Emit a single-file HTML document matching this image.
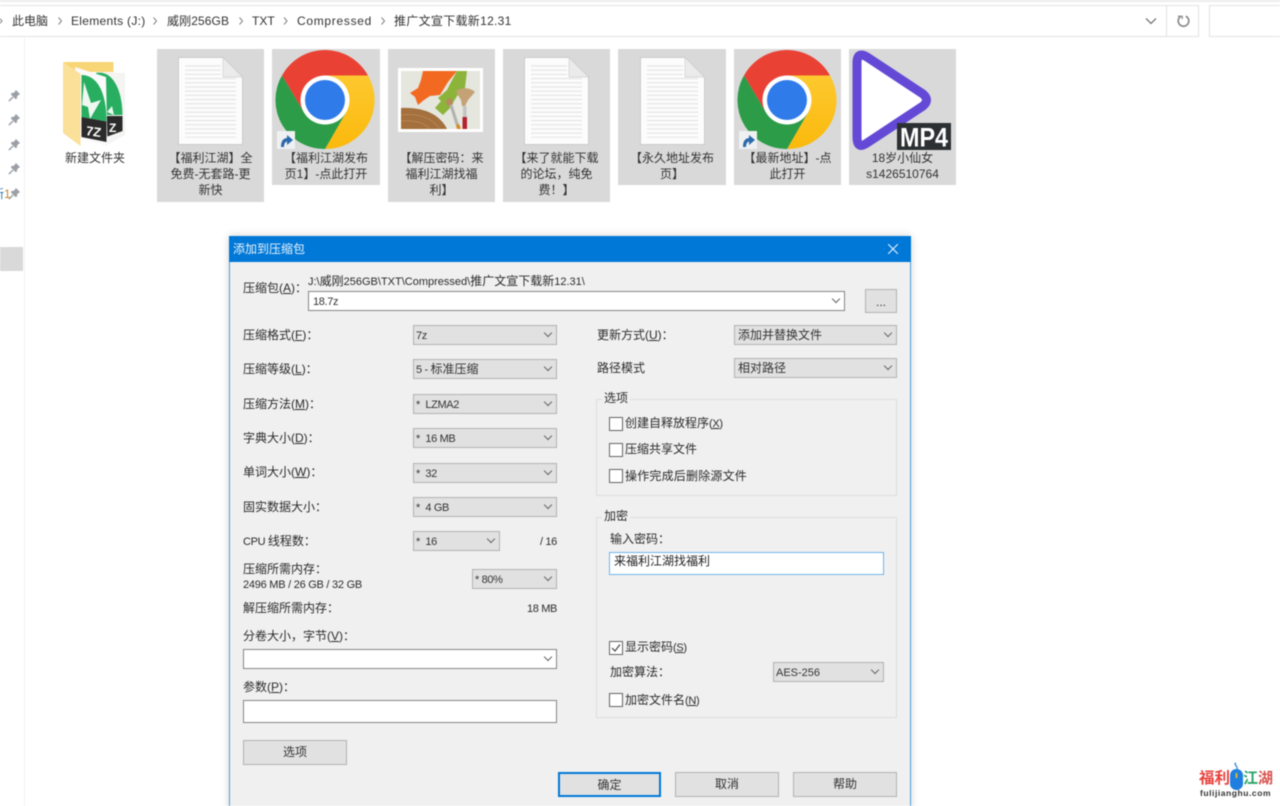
<!DOCTYPE html>
<html lang="zh-CN"><head><meta charset="utf-8"><title>添加到压缩包</title>
<style>
html,body{margin:0;padding:0;width:1280px;height:806px;overflow:hidden;background:#fff}
#w{position:absolute;left:0;top:0;width:1280px;height:806px;overflow:hidden;background:#fff;filter:blur(.45px);font:12px/16px "Liberation Sans","Noto Sans CJK SC",sans-serif;color:#2b2b2b}
.a{position:absolute}
.t{position:absolute;white-space:nowrap;line-height:16px}
.tile{position:absolute;top:49px;background:#d9d9d9;height:136px}
.tile.h{height:153px}
.lb{position:absolute;top:101px;left:0;right:0;text-align:center;line-height:16px;color:#333}
.s{position:absolute;box-sizing:border-box;background:#e1e1e1;border:1px solid #b2b2b2;line-height:18px;padding-left:2px;white-space:nowrap;color:#333}
.s:after{content:"";position:absolute;right:5px;top:4px;width:5px;height:5px;border-right:1px solid #666;border-bottom:1px solid #666;transform:rotate(45deg)}
.s.n:after{display:none}
.w{background:#fff;border-color:#858585}
.b{position:absolute;box-sizing:border-box;background:#e1e1e1;border:1px solid #b2b2b2;text-align:center;color:#333}
.c{position:absolute;left:609px;box-sizing:border-box;width:14px;height:14px;background:#fff;border:1px solid #666}
.g{position:absolute;box-sizing:border-box;border:1px solid #dedede}
.lg{position:absolute;background:#f0f0f0;padding:0 2px;line-height:16px;left:602px}
.l{font-size:11px;letter-spacing:-.35px}
u{text-underline-offset:1px}
</style></head><body><div id="w">

<svg width="0" height="0" style="position:absolute"><defs>
<pattern id="ln" width="10" height="4.2" patternUnits="userSpaceOnUse"><rect width="10" height="1.1" fill="#e3e3e3"/></pattern>
<linearGradient id="yg" x1="0" y1="0" x2="0" y2="1"><stop offset="0" stop-color="#fdc92f"/><stop offset="1" stop-color="#fbb90c"/></linearGradient>
<symbol id="doc" viewBox="0 0 65 88"><path d="M.5.5H45L64.5 20V87.5H.5Z" fill="#fcfcfc" stroke="#cacaca"/><path d="M45 .5V20H64.500Z" fill="#ebebeb" stroke="#cfcfcf" stroke-width=".7"/><rect x="7" y="8" width="36" height="12.5" fill="url(#ln)"/><rect x="7" y="20.6" width="51" height="60" fill="url(#ln)"/></symbol>
<symbol id="chr" viewBox="-50 -50 100 100"><path d="M43-24.5A49 49 0 0 0-43-24.5L-21.2 12.25 0 0V-24.5Z" fill="#e94235"/><path d="M43-24.5A49 49 0 0 1 0 49L21.2 12.25 0 0V-24.5Z" fill="url(#yg)"/><path d="M-43-24.5A49 49 0 0 0 0 49L21.2 12.25 0 0-21.2 12.25Z" fill="#2c9c48"/><circle r="24.5" fill="#fff"/><circle r="20" fill="#2f7be9"/></symbol>
<symbol id="sc" viewBox="0 0 18 18"><rect width="18" height="18" fill="#eef0f2"/><path d="M4 16C4 10 6 7.500 10 7V4L16 9 10 14V10.500C8 11 7 13 7 16Z" fill="#2b69ad"/></symbol>
<symbol id="pin" viewBox="0 0 12 12"><path d="M7.200.8 11.200 4.800 9.800 5.400 8.500 6.700 8.200 9 6.800 9.200 2.800 5.200 3 3.800 5.300 3.500 6.600 2.200Z" fill="#9aa0a6"/><path d="M4.500 7.500.8 11.200" stroke="#9aa0a6" stroke-width="1.300"/></symbol>
</defs></svg>

<!-- address bar -->
<div class="a" style="left:0;top:0;width:1280px;height:2px;background:#ececec"></div>
<div class="a" style="left:-2px;top:5px;width:1201px;height:32px;box-sizing:border-box;border:1px solid #e2e2e2"></div>
<div class="a" style="left:1166px;top:6px;width:1px;height:30px;background:#e2e2e2"></div>
<div class="a" style="left:1209px;top:5px;width:90px;height:32px;box-sizing:border-box;border:1px solid #e2e2e2"></div>
<svg class="a" style="left:0;top:14px" width="400" height="14" fill="none" stroke="#8a8a8a" stroke-width="1.100"><path d="M-1 3.500 2 7-1 10.500M58.500 3.500 61.500 7 58.500 10.500M153.500 3.500 156.500 7 153.500 10.500M239.500 3.500 242.500 7 239.500 10.500M284 3.500 287 7 284 10.500M381.500 3.500 384.500 7 381.500 10.500"/></svg>
<span class="t" style="left:12px;top:13px;color:#333">此电脑</span>
<span class="t" style="left:71px;top:13px;color:#333;letter-spacing:.3px">Elements (J:)</span>
<span class="t" style="left:167px;top:13px;color:#333;letter-spacing:.1px">威刚256GB</span>
<span class="t" style="left:252px;top:13px;color:#333">TXT</span>
<span class="t" style="left:297px;top:13px;color:#333;letter-spacing:.7px">Compressed</span>
<span class="t" style="left:394px;top:13px;color:#333;letter-spacing:.3px">推广文宣下载新12.31</span>
<svg class="a" style="left:1145px;top:17px" width="12" height="8" fill="none" stroke="#777" stroke-width="1.300"><path d="M1 1.500 6 6.500 11 1.500"/></svg>
<svg class="a" style="left:1176px;top:14px" width="14" height="14" fill="none" stroke="#8a8a8a" stroke-width="1.700"><path d="M4.800 2.400A5.300 5.300 0 1 0 9.800 2.200"/><path d="M1.800 2.200H6.200V5" stroke-width="1.200"/></svg>

<!-- sidebar -->
<div class="a" style="left:24px;top:37px;width:1px;height:769px;background:#f3f3f3"></div>
<svg class="a" style="left:8px;top:89px" width="13" height="13"><use href="#pin"/></svg>
<svg class="a" style="left:8px;top:113px" width="13" height="13"><use href="#pin"/></svg>
<svg class="a" style="left:8px;top:138px" width="13" height="13"><use href="#pin"/></svg>
<svg class="a" style="left:8px;top:162px" width="13" height="13"><use href="#pin"/></svg>
<svg class="a" style="left:8px;top:187px" width="13" height="13"><use href="#pin"/></svg>
<span class="t" style="left:-8px;top:186px;color:#1b6fb5">新<span style="color:#c9852f">1</span></span>
<div class="a" style="left:0;top:247px;width:23px;height:24px;background:#d9d9d9"></div>

<!-- folder -->
<svg class="a" style="left:60px;top:58px" width="72" height="92" viewBox="60 58 72 92">
<path d="M63.500 62H113.500V72H63.500Z" fill="#f8d675"/>
<path d="M96 72 125 73V135L107 145 96 140Z" fill="#f4f4f2"/>
<path d="M96 73C110 70 122 85 122.500 115H96Z" fill="#27ae60"/>
<path d="M107 112 112 106 114 115Z" fill="#eef7f0"/>
<path d="M104 116H122.500V131L106 137Z" fill="#2a2a2a"/>
<text x="109" y="132" font-family="Liberation Sans" font-weight="bold" font-size="12" fill="#fff">Z</text>
<path d="M75 67 106 77 107.500 146.500 81 138Z" fill="#fafafa"/>
<path d="M81.500 75C96 75 106.500 90 106.500 121.500L81.500 117Z" fill="#27ae60"/>
<path d="M84 82 91 103 101 100 90 119 88 107 82 105Z" fill="#eef7f0"/>
<path d="M81.500 117 106.500 121.500V142L81.500 137Z" fill="#2a2a2a"/>
<text x="86" y="136" font-family="Liberation Sans" font-weight="bold" font-size="13" fill="#fff" transform="rotate(8 93 132)">7Z</text>
<path d="M63 62 80.500 74V146L63 133Z" fill="#fbe09a"/>
</svg>
<div class="t" style="left:40px;top:150px;width:110px;text-align:center;color:#333">新建文件夹</div>

<!-- tiles -->
<div class="tile h" style="left:157px;width:107px"><div class="lb">【福利江湖】全<br>免费-无套路-更<br>新快</div></div>
<svg class="a" style="left:178px;top:57px" width="65" height="88"><use href="#doc"/></svg>

<div class="tile" style="left:272px;width:108px"><div class="lb">【福利江湖发布<br>页1】-点此打开</div></div>
<svg class="a" style="left:275px;top:50px" width="100" height="100"><use href="#chr"/></svg>
<svg class="a" style="left:277px;top:131px" width="18" height="18"><use href="#sc"/></svg>

<div class="tile h" style="left:388px;width:107px"><div class="lb">【解压密码：来<br>福利江湖找福<br>利】</div></div>
<svg class="a" style="left:398px;top:68px" width="85" height="64" viewBox="398 68 85 64">
<rect x="398" y="68" width="85" height="64" fill="#fff"/>
<rect x="401" y="71" width="79" height="58" fill="#e5e6de"/>
<path d="M423 71H457L448 82 440 95 430 96 424 100 418 105 415 97 410 93 418 88 421 80Z" fill="#f26a21"/>
<path d="M457 71H467L465 88 457 96 450 108 443 115 435 108 441 101 438 98 447 90 451 82Z" fill="#8cb43a"/>
<path d="M401 108C425 107 440 115 447 129H401Z" fill="#a3703e"/>
<path d="M401 115C420 113 432 118 440 129M401 121C415 120 425 123 430 129" stroke="#b98a56" fill="none" stroke-width=".8"/>
<path d="M449 104 452 103 459 125 456 126Z" fill="#b3b3b3"/>
<path d="M446 103C446 99 450 97 452 99L453 104 448 106Z" fill="#b8895b"/>
<path d="M456 125 459 124 461 129H457Z" fill="#d88a22"/>
<path d="M456 92C459 87 470 87 475 92L468 100 465 106 462 106 461 100Z" fill="#c4a276"/>
<rect x="463" y="106" width="3.500" height="11" fill="#c3c3c3"/>
<rect x="462.500" y="117" width="4.500" height="12" fill="#b3222e"/>
</svg>

<div class="tile h" style="left:503px;width:107px"><div class="lb">【来了就能下载<br>的论坛，纯免<br>费！】</div></div>
<svg class="a" style="left:524px;top:57px" width="65" height="88"><use href="#doc"/></svg>

<div class="tile" style="left:618px;width:108px"><div class="lb">【永久地址发布<br>页】</div></div>
<svg class="a" style="left:640px;top:57px" width="65" height="88"><use href="#doc"/></svg>

<div class="tile" style="left:734px;width:107px"><div class="lb">【最新地址】-点<br>此打开</div></div>
<svg class="a" style="left:737px;top:50px" width="100" height="100"><use href="#chr"/></svg>
<svg class="a" style="left:739px;top:131px" width="18" height="18"><use href="#sc"/></svg>

<div class="tile" style="left:849px;width:107px"><div class="lb">18岁小仙女<br>s1426510764</div></div>
<svg class="a" style="left:849px;top:49px" width="107" height="104" viewBox="849 49 107 104">
<path d="M857 63Q857 51 867 57L923 94Q930 100 923 106L867 143Q857 150 857 137Z" fill="#fff" stroke="#6349d6" stroke-width="9" stroke-linejoin="round"/>
<rect x="897" y="123" width="54" height="27" fill="#2c3033"/>
<text x="900" y="146.500" font-family="Liberation Sans" font-size="27" font-weight="bold" fill="#fff" textLength="48" lengthAdjust="spacingAndGlyphs">MP4</text>
</svg>

<!-- dialog -->
<div class="a" style="left:229px;top:236px;width:682px;height:580px;box-sizing:border-box;background:#f0f0f0;border:1px solid #4a9fe2;box-shadow:0 0 8px rgba(0,0,0,.18)"></div>
<div class="a" style="left:229px;top:236px;width:682px;height:26px;background:#0078d7"></div>
<span class="t" style="left:233px;top:241px;color:#e8f3fc">添加到压缩包</span>
<svg class="a" style="left:888px;top:244px" width="10" height="10" stroke="#e6f2fb" stroke-width="1.100"><path d="M0 0 10 10M10 0 0 10"/></svg>

<span class="t" style="left:243px;top:280px">压缩包(<u>A</u>)：</span>
<span class="t" style="left:308px;top:273px;font-size:11px">J:\<span style="font-size:12px">威刚</span>256GB\TXT\Compressed\<span style="font-size:12px">推广文宣下载新</span>12.31\</span>
<div class="s w" style="left:308px;top:291px;width:537px;height:20px;padding-left:4px"><span class="l">18.7z</span></div>
<div class="b" style="left:865px;top:289px;width:32px;height:24px;line-height:24px">...</div>

<span class="t" style="left:243px;top:327px">压缩格式(<u>F</u>)：</span>
<div class="s" style="left:413px;top:325px;width:144px;height:20px"><span class="l">7z</span></div>
<span class="t" style="left:243px;top:361px">压缩等级(<u>L</u>)：</span>
<div class="s" style="left:413px;top:359px;width:144px;height:20px"><span class="l">5 - </span>标准压缩</div>
<span class="t" style="left:243px;top:396px">压缩方法(<u>M</u>)：</span>
<div class="s" style="left:413px;top:394px;width:144px;height:20px"><span class="l">*&nbsp; LZMA2</span></div>
<span class="t" style="left:243px;top:430px">字典大小(<u>D</u>)：</span>
<div class="s" style="left:413px;top:428px;width:144px;height:20px"><span class="l">*&nbsp; 16 MB</span></div>
<span class="t" style="left:243px;top:464px">单词大小(<u>W</u>)：</span>
<div class="s" style="left:413px;top:463px;width:144px;height:20px"><span class="l">*&nbsp; 32</span></div>
<span class="t" style="left:243px;top:499px">固实数据大小：</span>
<div class="s" style="left:413px;top:497px;width:144px;height:20px"><span class="l">*&nbsp; 4 GB</span></div>
<span class="t" style="left:243px;top:533px"><span class="l">CPU </span>线程数：</span>
<div class="s" style="left:413px;top:531px;width:87px;height:20px"><span class="l">*&nbsp; 16</span></div>
<span class="t" style="left:540px;top:533px"><span class="l">/ 16</span></span>
<span class="t" style="left:243px;top:561px">压缩所需内存：</span>
<span class="t" style="left:243px;top:577px;font-size:11px;letter-spacing:-.25px">2496 MB / 26 GB / 32 GB</span>
<div class="s" style="left:472px;top:569px;width:85px;height:20px"><span class="l">* 80%</span></div>
<span class="t" style="left:243px;top:600px">解压缩所需内存：</span>
<span class="t" style="right:723px;top:600px"><span class="l">18 MB</span></span>
<span class="t" style="left:243px;top:628px">分卷大小，字节(<u>V</u>)：</span>
<div class="s w" style="left:243px;top:649px;width:314px;height:20px"></div>
<span class="t" style="left:243px;top:679px">参数(<u>P</u>)：</span>
<div class="s w n" style="left:243px;top:700px;width:314px;height:23px"></div>
<div class="b" style="left:243px;top:740px;width:104px;height:25px;line-height:23px">选项</div>

<span class="t" style="left:597px;top:327px">更新方式(<u>U</u>)：</span>
<div class="s" style="left:734px;top:325px;width:163px;height:20px;padding-left:3px">添加并替换文件</div>
<span class="t" style="left:597px;top:360px">路径模式</span>
<div class="s" style="left:734px;top:358px;width:163px;height:20px;padding-left:3px">相对路径</div>

<div class="g" style="left:596px;top:399px;width:301px;height:97px"></div>
<span class="lg" style="top:390px">选项</span>
<div class="c" style="top:417px"></div><span class="t" style="left:625px;top:415px">创建自释放程序<span class="l">(<u>X</u>)</span></span>
<div class="c" style="top:443px"></div><span class="t" style="left:625px;top:441px">压缩共享文件</span>
<div class="c" style="top:469px"></div><span class="t" style="left:625px;top:468px;letter-spacing:.2px">操作完成后删除源文件</span>

<div class="g" style="left:596px;top:517px;width:301px;height:201px"></div>
<span class="lg" style="top:508px">加密</span>
<span class="t" style="left:610px;top:531px">输入密码：</span>
<div class="a" style="left:609px;top:552px;width:275px;height:23px;box-sizing:border-box;background:#fff;border:1px solid #6fb3ea;line-height:17px;padding-left:4px;color:#222">来福利江湖找福利</div>
<div class="c" style="top:641px"></div>
<svg class="a" style="left:609px;top:641px" width="14" height="14" fill="none" stroke="#444" stroke-width="1.200"><path d="M3 7 6 10 11 3.500"/></svg>
<span class="t" style="left:625px;top:639px">显示密码<span class="l">(<u>S</u>)</span></span>
<span class="t" style="left:610px;top:664px">加密算法：</span>
<div class="s" style="left:773px;top:662px;width:111px;height:20px"><span style="font-size:11px">AES-256</span></div>
<div class="c" style="top:693px"></div><span class="t" style="left:625px;top:692px">加密文件名<span class="l">(<u>N</u>)</span></span>

<div class="b" style="left:558px;top:772px;width:103px;height:25px;line-height:22px;border:2px solid #0078d7">确定</div>
<div class="b" style="left:675px;top:772px;width:104px;height:25px;line-height:23px">取消</div>
<div class="b" style="left:793px;top:772px;width:104px;height:25px;line-height:23px">帮助</div>

<!-- watermark -->
<span class="t" style="left:1199px;top:770px;font-size:15.500px;line-height:18px;font-weight:bold;color:#e8413c">福利</span>
<span class="t" style="left:1243px;top:770px;font-size:15px;line-height:18px;font-weight:bold;color:#2aa56a">江<span style="color:#d9534f">湖</span></span>
<svg class="a" style="left:1229px;top:762px" width="15" height="29" fill="none"><path d="M7 1C4 2 9 4 8 7" stroke="#2f7fd6" stroke-width="1.200"/><rect x="1" y="7" width="13" height="21" rx="6.300" fill="#1f7fe0"/><rect x="6.700" y="11" width="1.600" height="5" fill="#f0c419"/></svg>
<span class="t" style="left:1200px;top:787px;font-size:8.500px;line-height:12px;font-weight:bold;letter-spacing:.55px;color:#333">fulijianghu.com</span>
</div></body></html>
